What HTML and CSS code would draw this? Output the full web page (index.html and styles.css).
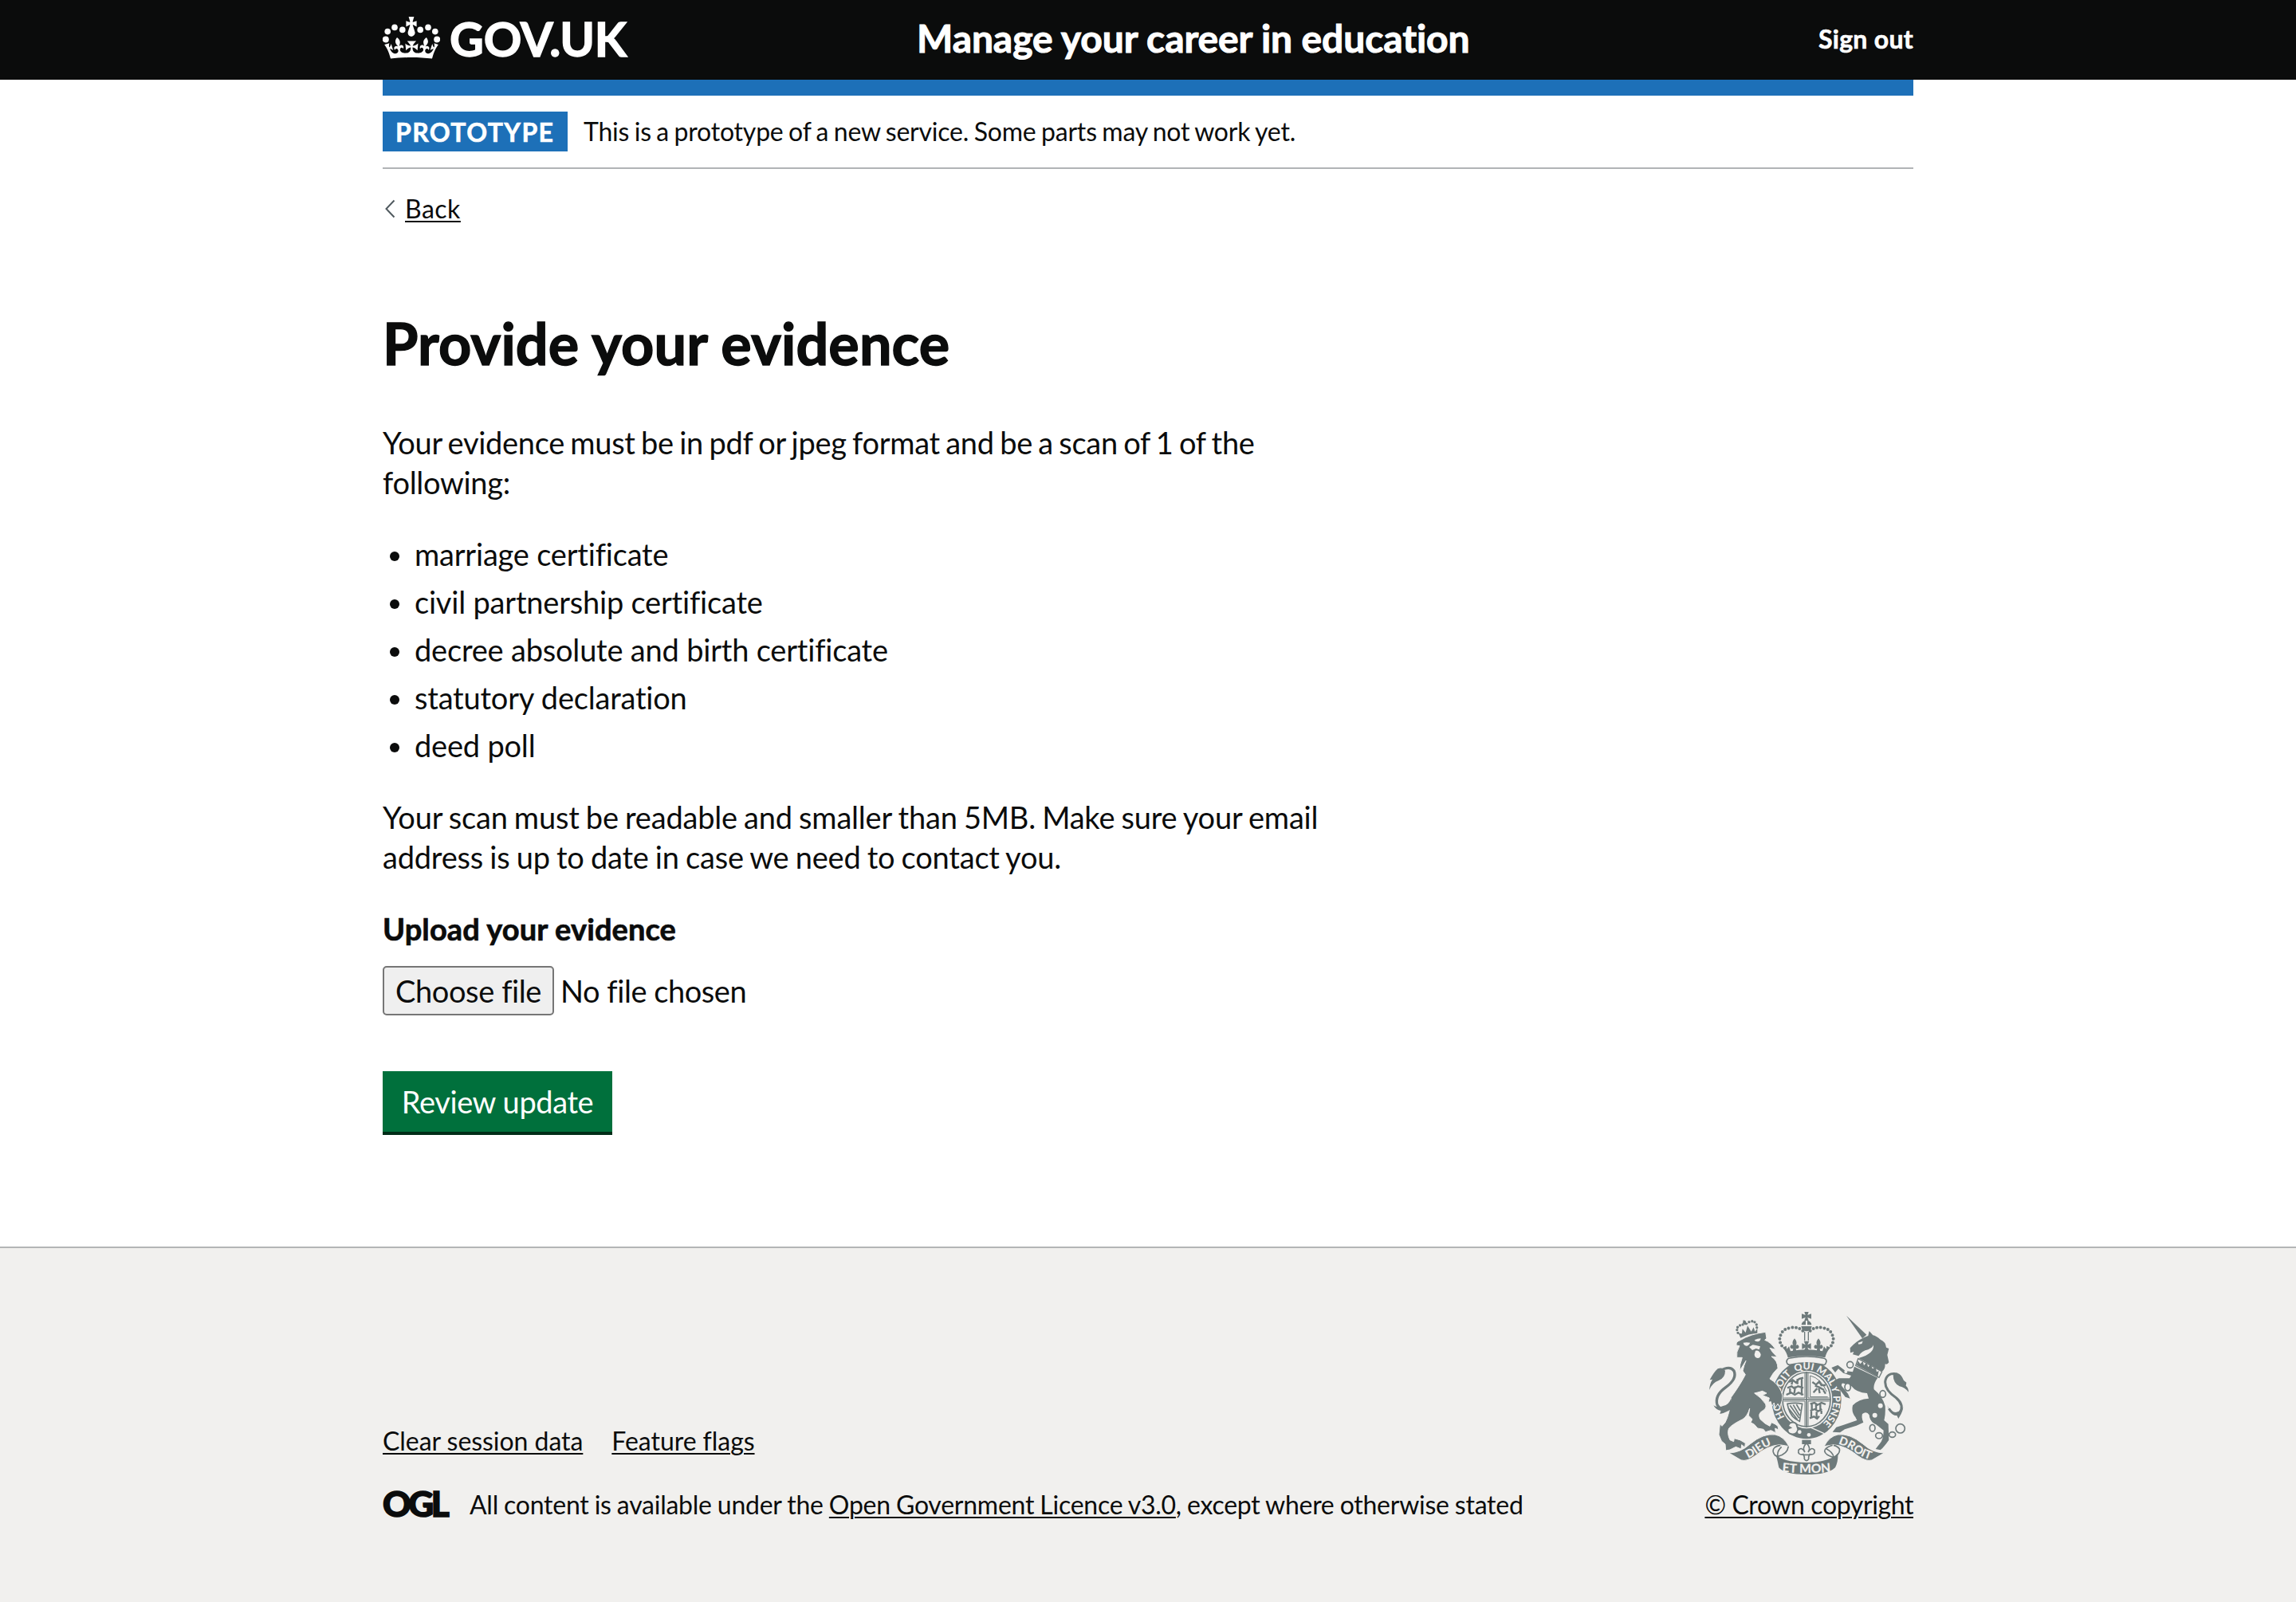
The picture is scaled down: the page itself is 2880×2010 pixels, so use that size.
FILE: index.html
```
<!DOCTYPE html>
<html lang="en">
<head>
<meta charset="utf-8">
<title>Provide your evidence - Manage your career in education</title>
<link rel="stylesheet" href="styles.css">
</head>
<body>
<header class="header">
  <div class="container header-inner">
    <a class="logo" href="#">
      <svg class="crown" viewBox="0 0 36 27" aria-hidden="true">
        <g fill="currentColor">
          <circle cx="1.9" cy="14.7" r="2"/><circle cx="3.1" cy="9.8" r="1.9"/><circle cx="7.5" cy="7.2" r="1.9"/><circle cx="12.4" cy="8.7" r="1.9"/>
          <circle cx="34.1" cy="14.7" r="2"/><circle cx="32.9" cy="9.8" r="1.9"/><circle cx="28.5" cy="7.2" r="1.9"/><circle cx="23.6" cy="8.7" r="1.9"/>
          <path transform="translate(2 .5) scale(1 1.06)" d="M17 4.7l2.3 1.2V2.5l-2.3.7-.2-.2.9-3h-3.4l.9 3-.2.2c-.1.1-2.3-.7-2.3-.7v3.4L15 4.7c.1.1.1.2.2.2l-1.3 4c-.1.2-.1.4-.1.6 0 1.1.8 2 1.9 2.2h.7c1-.2 1.9-1.1 1.9-2.1 0-.2 0-.4-.1-.6l-1.3-4c-.1-.2 0-.2.1-.3"/>
          <path transform="translate(1.09 -3.2) scale(1.057 1)" d="M16 29.2c4.4 0 8.6.3 12.3.8 1.1-4.5 2.4-7 3.7-8.8l-2.5-.9c.2 1.3.3 1.9 0 2.7-.4-.4-.8-1.1-1.1-2.3l-1.2 4c.7-.5 1.3-.8 2-.9-1.1 2.5-2.6 3.1-3.5 3-1.1-.2-1.7-1.2-1.5-2.1.3-1.2 1.5-1.5 2.1-.1 1.1-2.3-.8-3-2-2.3 1.9-1.9 2.1-3.5.6-5.6-2.1 1.6-2.1 3.2-1.2 5.5-1.2-1.4-3.2-.6-2.5 1.6.9-1.4 2.1-.5 1.9.8-.2 1.1-1.7 2.1-3.5 1.9-2.7-.2-2.9-2.1-2.9-3.6.7-.1 1.9.5 2.9 1.9l.4-4.3c-1.1 1.1-2.1 1.4-3.2 1.4.4-1.2 2.1-3 2.1-3h-5.4s1.7 1.9 2.1 3c-1.1 0-2.1-.2-3.2-1.4l.4 4.3c1-1.4 2.2-2 2.9-1.9-.1 1.5-.2 3.4-2.9 3.6-1.9.2-3.4-.8-3.5-1.9-.2-1.3 1-2.2 1.9-.8.7-2.3-1.2-3-2.5-1.6.9-2.2.9-3.9-1.2-5.5-1.5 2-1.3 3.7.6 5.6-1.2-.7-3.1 0-2 2.3.6-1.4 1.8-1.1 2.1.1.2.9-.3 1.9-1.5 2.1-.9.2-2.4-.5-3.5-3 .6 0 1.2.3 2 .9l-1.2-4c-.3 1.1-.7 1.9-1.1 2.3-.3-.8-.2-1.4 0-2.7l-2.9.9C1.3 23 2.6 25.5 3.7 30c3.7-.5 7.9-.8 12.3-.8"/>
        </g>
      </svg>
      <span class="logo-text">GOV.UK</span>
    </a>
    <a class="service-name" href="#">Manage your career in education</a>
    <a class="sign-out" href="#">Sign out</a>
  </div>
</header>

<div class="container">
  <div class="phase-banner">
    <strong class="tag">PROTOTYPE</strong>
    <span class="phase-text">This is a prototype of a new service. Some parts may not work yet.</span>
  </div>
  <nav class="back">
    <svg class="chevron" viewBox="0 0 14 24" aria-hidden="true"><path d="M12.5 1.5 2.5 12l10 10.5" fill="none" stroke="#505a5f" stroke-width="2"/></svg>
    <a class="link" href="#">Back</a>
  </nav>

  <main class="main">
    <h1 class="heading">Provide your evidence</h1>
    <p class="body format">Your evidence must be in pdf or jpeg format and be a scan of 1 of the<br>following:</p>
    <ul class="list">
      <li>marriage certificate</li>
      <li>civil partnership certificate</li>
      <li>decree absolute and birth certificate</li>
      <li>statutory declaration</li>
      <li>deed poll</li>
    </ul>
    <p class="body scan">Your scan must be readable and smaller than 5MB. Make sure your email<br>address is up to date in case we need to contact you.</p>
    <div class="label">Upload your evidence</div>
    <div class="file">
      <button class="file-button" type="button">Choose file</button>
      <span class="file-status">No file chosen</span>
    </div>
    <button class="button" type="button">Review update</button>
  </main>
</div>

<footer class="footer">
  <div class="container footer-inner">
    <div class="meta">
      <div class="meta-links"><a class="link clear" href="#">Clear session data</a><a class="link" href="#">Feature flags</a></div>
      <div class="licence">
        <span class="ogl">OGL</span>
        <span class="licence-text">All content is available under the <a class="link" href="#">Open Government Licence v3.0</a>, except where otherwise stated</span>
      </div>
    </div>
    <div class="copyright">
      <svg class="crest" viewBox="72 78 750 612" aria-hidden="true">
        <defs>
          <path id="motto" d="M438 521A101 113 0 0 1 438 295A101 113 0 0 1 438 521"/>
          <path id="dieu" d="M206 634Q235 624 262 603Q290 582 330 572"/>
          <path id="etmon" d="M340 679Q438 690 536 679"/>
          <path id="droit" d="M544 572Q590 582 622 607Q650 627 690 637"/>
        </defs>

        <!-- royal crown -->
        <g class="ink">
          <path d="M430 78h16l-4 12 14-5v19l-14-5 4 12h-16l4-12-14 5V85l14 5z"/>
          <path d="M419 127q1-14 16-17v17zM441 110q15 3 16 17h-16zM418 132h40q-2 17-20 19-18-2-20-19z"/>
          <path d="M429 152h4v34h-4zM443 152h4v34h-4z"/>
          <path d="M428 188h20l-6 14 13-6v22l-13-6 6 14h-20l6-14-13 6v-22l13 6z"/>
          <path d="M393 178q12 14 5 26 10-6 12 6-2 9-12 6l2 12h-14l2-12q-10 3-12-6 2-12 12-6-7-12 5-26z"/>
          <path d="M483 178q12 14 5 26 10-6 12 6-2 9-12 6l2 12h-14l2-12q-10 3-12-6 2-12 12-6-7-12 5-26z"/>
          <path d="M348 212l14-6 2 12 8-10 6 18q60-12 120 0l6-18 8 10 2-12 14 6q-15 16-20 38-70-12-140 0-5-22-20-38z"/>
        </g>
        <path class="beads" d="M424 149Q404 132 378 138Q342 142 337 180Q338 200 350 211M452 149Q472 132 498 138Q534 142 539 180Q538 200 526 211"/>

        <!-- garter and shield -->
        <ellipse class="ink" cx="438" cy="408" rx="131" ry="148"/>
        <path d="M376 252Q438 240 500 252Q516 254 512 268Q508 280 500 277Q438 262 376 277Q364 278 363 264Q366 252 376 252z" fill="#f1f0ee" stroke="#6e7a7b" stroke-width="5"/>
        <ellipse cx="438" cy="408" rx="97" ry="109" fill="#f1f0ee"/>
        <ellipse class="line" cx="438" cy="408" rx="90" ry="102" stroke-width="5"/>
        <path class="line" stroke-width="5" d="M438 304v208M348 408h180"/>
        <path class="line" stroke-width="3" d="M432 306v96h-80M444 306v96h80M432 510v-96h-80M444 510v-96h80"/>
        <g class="line" stroke-width="7">
          <path d="M372 342l14-8 12 10 12-14 16-4M366 364l16-6 10 8 14-8 20 6M362 390l18-8 14 8 14-8 18 8M386 334l-4 18M404 330v20M420 326v66M396 358l-4 26M376 366v20"/>
          <path d="M452 424l16-4 12 8 14-8 16 6M452 450l18-6 12 8 14-8M450 478l16-6 12 8 8-10M458 424v22M474 426v24M490 424v24M456 452v22M476 454v28M494 450v12"/>
          <path d="M460 342l14 10 12-12 8 14 16 0M470 356l16 6 18 10M464 382l14-16M484 366l4 18M502 374l8 12"/>
        </g>
        <path class="line" stroke-width="3" d="M452 318v80h66M452 318q40 10 62 60"/>
        <path class="line" stroke-width="5" d="M366 424q30-6 56 0l-10 66q-38-16-46-66zM376 430l34 48M388 428l24 40M400 426l14 24M370 440l34 44"/>
        <g class="motto">
          <text><textPath href="#motto" startOffset="19%">HO</textPath></text>
          <text><textPath href="#motto" startOffset="34.8%">SOIT</textPath></text>
          <text><textPath href="#motto" startOffset="48.7%">QUI</textPath></text>
          <text><textPath href="#motto" startOffset="61.3%">MAL</textPath></text>
          <text><textPath href="#motto" startOffset="69.6%">Y</textPath></text>
          <text><textPath href="#motto" startOffset="81.4%">PENSE</textPath></text>
        </g>
        <path d="M505 536L456 514M400 500l-26 36" fill="none" stroke="#f1f0ee" stroke-width="4"/>
        <path d="M374 498q16-10 26 2l6 20q-4 20-24 18-18-4-14-20l10-4-10-6z" fill="#f1f0ee" stroke="#6e7a7b" stroke-width="6"/>
        <circle cx="412" cy="530" r="7" fill="#f1f0ee"/><circle cx="447" cy="541" r="7" fill="#f1f0ee"/>

        <!-- lion -->
        <path class="ink cut" d="M186 186Q230 160 284 154L288 178L281 184Q304 192 322 220L300 214Q308 230 328 248L306 246Q330 262 330 290Q312 306 300 330Q330 348 342 376Q352 392 346 412L338 436L330 424L320 440L316 420L308 434L304 416L294 418L298 402L272 392L288 384L272 376L258 380L242 384Q268 400 284 425Q290 442 270 452Q254 462 264 482L282 498L300 508L306 494Q322 500 330 508L333 522L320 516L322 533L304 524L284 530L276 520L254 516L242 502L228 494L234 482L220 468L224 442Q216 470 198 482Q160 500 146 516Q138 535 150 560L164 566L166 554Q190 558 208 572L206 588L194 578L192 594L172 586L150 597L134 600L132 576L118 564L108 540L112 500L120 508L132 494Q150 460 154 400Q190 350 208 314L198 300Q202 280 210 262L186 300Q186 276 196 250L176 250Q172 230 186 206L174 204Q172 190 186 186z"/>
        <g fill="#f1f0ee">
          <path d="M200 194q12-2 26 0-6 12-14 12-10-2-12-12zM242 184q12-6 24-6-2 12-12 12-10 0-12-6z"/>
          <path d="M222 210l14-8 12 2 16 4-4 12-12-4-14 6zM246 224q14-4 20 14 0 14-12 14-12-2-12-14z"/>
          <path d="M186 176Q228 152 262 150L262 156Q228 158 188 182z"/>
        </g>
        <g class="ink">
          <path d="M182 158l8 18Q220 160 253 158V140l-9 12-5-16-9 16-14-22-7 26-12-14-2 18z"/>
          <path d="M200 109l8 2 4 8 6 2-4 6h-8l-8-6z"/>
        </g>
        <path class="beads small" d="M180 157Q172 140 182 132Q194 124 204 126M222 116Q240 108 249 124Q254 136 248 146"/>
        <path class="line" stroke-width="10" d="M112 300Q150 278 165 300Q178 330 134 362Q92 392 102 428Q118 456 152 440"/>
        <path class="ink" d="M72 372Q74 348 84 332L74 334Q90 304 104 292Q122 284 132 300Q132 326 108 336Q84 344 72 372zM88 430Q104 440 124 432Q146 428 154 404L160 440Q138 456 112 462L116 450Q98 448 88 430z"/>

        <!-- unicorn -->
        <path class="ink" d="M588 92L664 164L648 178z"/>
        <path class="ink" d="M655 174Q622 190 602 214L603 232L616 228L612 238L634 244Q646 224 670 220Q688 212 690 202Q694 236 634 252L722 302Q734 296 734 274Q742 278 748 268L742 240L748 216L738 212Q736 190 716 182Q700 168 688 166L674 150L670 168z"/>
        <path d="M632 194l18-6-4 10-12 2z" fill="#f1f0ee"/>
        <path d="M632 254L722 303L711 325L623 280z" fill="#f1f0ee" stroke="#6e7a7b" stroke-width="4"/>
        <path class="ink" d="M626 278l6-16 8 12 10-10 4 16 10-12 6 18 10-12 6 18 12-6 4 18 8-4-4 22z"/>
        <path class="ink" d="M618 284L706 326Q688 350 692 370Q724 396 734 432Q736 462 730 486L746 500L748 560Q730 586 716 598L698 594L712 576Q728 560 728 524L700 502Q676 492 674 466Q664 450 648 462Q644 478 652 494L626 506L582 520L564 532L536 530L550 512L576 504L628 486L622 474Q606 456 612 430Q634 406 672 404L666 384Q626 382 606 356L588 352Q568 340 570 356L594 386L602 404L584 398L566 374L552 360L542 336L560 328L600 328L606 318L576 308L558 292L546 306L532 288L556 278L584 300L612 304z"/>
        <g fill="#f1f0ee" stroke="#6e7a7b" stroke-width="5">
          <circle cx="602" cy="277" r="12"/><ellipse cx="593" cy="361" rx="11" ry="14"/><ellipse cx="725" cy="387" rx="11" ry="13"/>
          <ellipse cx="686" cy="515" rx="10" ry="13"/><ellipse cx="711" cy="544" rx="13" ry="11"/><ellipse cx="761" cy="540" rx="12" ry="10"/><circle cx="791" cy="517" r="17"/>
        </g>
        <g fill="#f1f0ee"><circle cx="716" cy="431" r="9"/><circle cx="695" cy="467" r="9"/><circle cx="586" cy="303" r="6"/></g>
        <path class="line" stroke-width="9" d="M780 312Q738 304 734 342Q734 374 776 402Q808 430 788 458Q770 474 748 442"/>
        <path class="ink" d="M764 314Q784 300 798 324L804 336L814 344L812 356Q822 364 822 380Q808 362 788 358Q764 346 764 314zM742 430Q752 456 774 456Q796 452 802 436Q800 452 794 462L784 480L778 468Q752 466 742 430z"/>

        <!-- ribbons -->
        <path class="ink cut" d="M146 609Q190 608 226 575Q276 534 320 540Q352 546 372 584L336 578Q290 582 244 620Q214 642 192 636z"/>
        <path class="ink cut" d="M730 609Q686 608 650 575Q600 534 556 540Q524 546 504 584L540 578Q586 582 632 620Q662 642 684 636z"/>
        <path class="ink" d="M322 614Q344 642 438 645Q532 642 556 610Q558 640 546 664Q520 690 438 690Q354 690 334 664Q330 640 322 614z"/>
        <path class="line" stroke-width="5" d="M340 580Q308 586 313 606Q318 622 330 622Q366 614 370 584M330 622Q326 602 344 586M536 580Q506 590 506 602Q508 616 540 626Q566 612 562 594Q556 584 540 580M540 626Q540 608 510 592"/>
        <g class="ribbon">
          <text><textPath href="#dieu" startOffset="46%">DIEU</textPath></text>
          <text class="wide"><textPath href="#etmon" startOffset="50%">ET MON</textPath></text>
          <text><textPath href="#droit" startOffset="50%">DROIT</textPath></text>
        </g>
        <path class="ink" d="M421 560h34v16h-34z"/>
        <path class="line" stroke-width="5" d="M438 572q18 18 6 34 12-22 24-8 4 20-18 16l-4 10q2 12-8 14-10-2-8-14l-4-10q-22 4-18-16 12-14 24 8-12-16 6-34zM424 616h28"/>
      </svg>
      <a class="link crown-link" href="#">© Crown copyright</a>
    </div>
  </div>
</footer>
</body>
</html>
```
FILE: styles.css
```
* { box-sizing: border-box; }

body {
  margin: 0;
  min-height: 2010px;
  display: flex;
  flex-direction: column;
  background: #fff;
  color: #0b0c0c;
  font-family: Lato, "Noto Sans", sans-serif;
  font-size: 38px;
  line-height: 50px;
}

a { color: inherit; text-decoration: none; }

.container { width: 1920px; margin: 0 auto; }

.link {
  text-decoration: underline;
  text-decoration-thickness: 2px;
  text-underline-offset: 3px;
}

/* Header */
.header { height: 100px; background: #0b0c0c; color: #fff; }
.header-inner {
  height: 100px;
  display: grid;
  grid-template-columns: 670px 1fr auto;
  align-items: start;
}
.logo { display: flex; height: 100px; }
.crown { width: 72px; height: 54px; margin-top: 20px; }
.logo-text {
  margin-left: 12px;
  font-size: 59px;
  font-weight: 700;
  line-height: 98px;
  letter-spacing: -0.2px;
  -webkit-text-stroke: 1.4px currentColor;
}
.service-name { font-size: 48px; font-weight: 700; line-height: 96px; letter-spacing: -0.1px; -webkit-text-stroke: 1px currentColor; }
.sign-out { font-size: 32px; font-weight: 700; line-height: 98px; letter-spacing: 0.3px; -webkit-text-stroke: 0.6px currentColor; }

/* Phase banner */
.phase-banner {
  display: flex;
  align-items: center;
  gap: 20px;
  padding: 20px 0;
  border-top: 20px solid #1d70b8;
  border-bottom: 2px solid #b1b4b6;
  font-size: 32px;
}
.tag {
  width: 232px;
  padding-left: 16px;
  background: #1d70b8;
  color: #fff;
  line-height: 51px;
  height: 50px;
  letter-spacing: 1.4px;
  -webkit-text-stroke: 0.6px currentColor;
}
.phase-text { line-height: 48px; letter-spacing: -0.2px; word-spacing: -1.5px; }

/* Back link */
.back {
  display: flex;
  align-items: center;
  gap: 12px;
  margin-top: 30px;
  padding-left: 2px;
  font-size: 32px;
  line-height: 40px;
}
.back .link { letter-spacing: 0.5px; }
.chevron { width: 14px; height: 24px; }

/* Content */
.main { padding-top: 108px; }
.heading { margin: 0 0 60px; font-size: 72px; line-height: 80px; letter-spacing: 0.1px; -webkit-text-stroke: 1.4px currentColor; }
.body { margin: 0 0 40px; white-space: nowrap; }
.format { letter-spacing: -0.3px; word-spacing: -2px; }
.scan { letter-spacing: -0.2px; word-spacing: -1.3px; }
.list { list-style: none; margin: 0 0 40px; padding: 0; letter-spacing: -0.2px; }
.list li { display: flex; align-items: center; gap: 19px; padding-left: 9px; }
.list li + li { margin-top: 10px; }
.list li::before { content: ""; width: 12px; height: 12px; margin-top: 6px; border-radius: 50%; background: currentColor; }
.label { font-weight: 700; letter-spacing: 0.1px; -webkit-text-stroke: 0.7px currentColor; }
.file { display: flex; align-items: center; gap: 8px; margin-top: 22px; }
.file-button {
  width: 215px;
  height: 62px;
  padding: 0;
  border: 2px solid #767676;
  border-radius: 5px;
  background: #efefef;
  color: #0b0c0c;
  font: inherit;
  line-height: 58px;
  letter-spacing: -0.4px;
}
.file-status { letter-spacing: -0.45px; }
.button {
  display: block;
  width: 288px;
  height: 80px;
  margin: 70px 0 0;
  padding: 0;
  border: 0;
  border-bottom: 4px solid #002d18;
  background: #00703c;
  color: #fff;
  font: inherit;
  letter-spacing: -0.4px;
}

/* Footer */
.footer {
  flex: 1;
  margin-top: 140px;
  border-top: 2px solid #b4b5b6;
  background: #f1f0ee;
  font-size: 32px;
  line-height: 40px;
}
.footer-inner { display: flex; justify-content: space-between; align-items: flex-end; padding-top: 80px; }
.meta-links { display: flex; gap: 36px; margin-bottom: 40px; letter-spacing: -0.05px; }
.licence { display: flex; align-items: center; height: 40px; }
.ogl {
  width: 109px;
  margin-top: -5px;
  font-size: 44px;
  font-weight: 900;
  line-height: 36px;
  letter-spacing: -3.4px;
  -webkit-text-stroke: 1.6px currentColor;
}
.licence-text { letter-spacing: -0.25px; word-spacing: -0.8px; }
.copyright { display: flex; flex-direction: column; align-items: flex-end; }
.crest { width: 250px; height: 204px; margin: 0 6px 18px 0; }
.crown-link { letter-spacing: -0.4px; }

/* Crest drawing */
.ink { fill: #6e7a7b; }
.cut { stroke: #f1f0ee; stroke-width: 3; }
.line { fill: none; stroke: #6e7a7b; }
.beads { fill: none; stroke: #6e7a7b; stroke-width: 12; stroke-linecap: round; stroke-dasharray: 0 14; }
.small { stroke-width: 10; stroke-dasharray: 0 11; }
.motto, .ribbon { fill: #f1f0ee; font-weight: 900; text-anchor: middle; }
.motto { font-size: 37px; }
.ribbon { font-size: 43px; }
.wide { font-size: 47px; }
```
